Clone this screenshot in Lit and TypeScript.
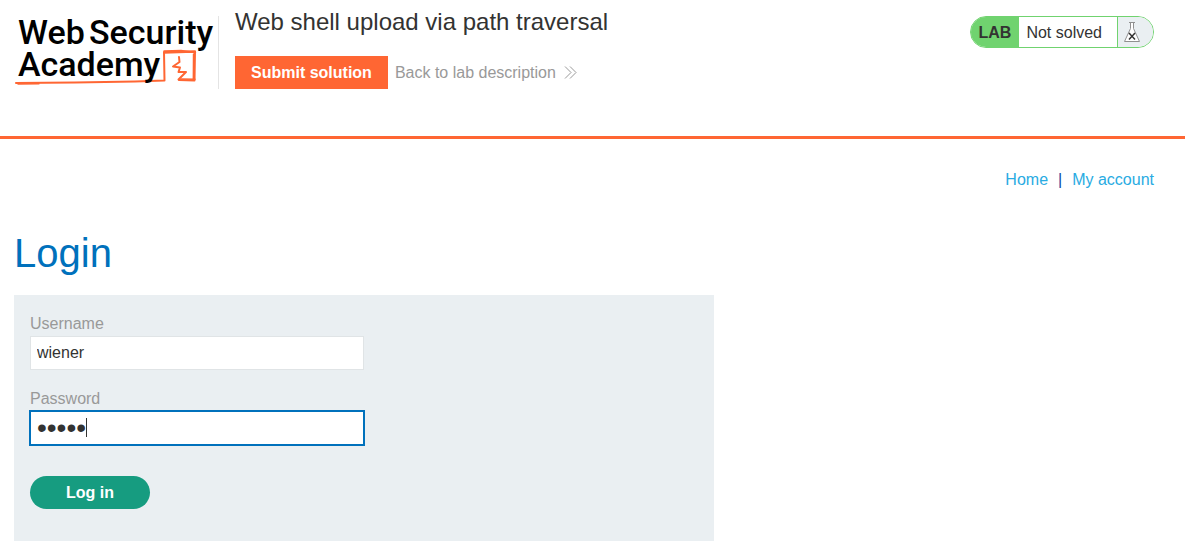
import { LitElement, html, css } from "lit";
import { customElement, query } from "lit/decorators.js";

@customElement("academy-logo")
export class AcademyLogo extends LitElement {
  static styles = css`
    :host { display: block; }
    .logo { display: block; width: 203px; height: 73px; overflow: visible; }
    .word { font-family: Roboto, sans-serif; font-weight: 500; font-size: 34px; fill: #000; }
    .sketch { fill: none; stroke: #ff6633; stroke-linejoin: round; stroke-linecap: round; }
  `;

  render() {
    return html`
      <svg class="logo" viewBox="0 0 203 73" role="img" aria-label="Web Security Academy">
        <path class="sketch" stroke-width="2" d="M1 67 L60 66.400 L120 65.500 L149.500 64.600 L149 36 L180 35.300 L179.500 64.500 L164 64"/>
        <path class="sketch" stroke-width="1.400" d="M3 68 L24 67.800 M149 35 L166 34.500 L180.500 36.500 M149 37 L178 36 M178.500 38 L178.300 64 M166 63 L180 63.200"/>
        <path class="sketch" stroke-width="2" d="M164 41 L164.500 46 L158 50.500 L165 51.500 L163.500 56 L171 56 L163.500 63.500"/>
        <text class="word" x="3" y="28">Web</text>
        <text class="word" x="74" y="28">Security</text>
        <text class="word" x="3" y="60">Academy</text>
      </svg>
    `;
  }
}

@customElement("lab-status")
export class LabStatus extends LitElement {
  static styles = css`
    :host { display: block; flex: none; }
    .pill {
      display: flex;
      height: 30px;
      border: 1px solid #70d36f;
      border-radius: 16px;
      overflow: hidden;
      background: #fff;
      font-size: 16px;
      line-height: 32px;
      color: #333332;
    }
    .tag { padding: 0 8px; background: #70d36f; font-weight: bold; }
    .state { padding: 0 15px 0 7px; line-height: 31px; }
    .flask {
      display: flex;
      align-items: center;
      padding: 0 12px 0 5px;
      border-left: 1px solid #70d36f;
      background: #eaeff2;
    }
    .glyph { display: block; width: 18px; height: 22px; }
  `;

  render() {
    return html`
      <div class="pill">
        <span class="tag">LAB</span>
        <span class="state">Not solved</span>
        <span class="flask">
          <svg class="glyph" viewBox="0 0 18 22" aria-hidden="true">
            <path d="M6 1.500 H12 M7.500 1.500 V7.500 L1.500 20.500 H16.500 L10.500 7.500 V1.500" fill="#fff" stroke="#909090" stroke-width="1"/>
            <path d="M6 12 L12 18.500 M12 12 L6 18.500" stroke="#333332" stroke-width="1.500"/>
          </svg>
        </span>
      </div>
    `;
  }
}

@customElement("login-form")
export class LoginForm extends LitElement {
  @query("#password") private password!: HTMLInputElement;

  static styles = css`
    :host { display: block; max-width: 700px; }
    .form {
      display: flex;
      flex-direction: column;
      align-items: flex-start;
      padding: 16px 16px 32px;
      background: #eaeff2;
    }
    .label { font-size: 16px; line-height: 25px; color: #999; }
    .box { position: relative; width: 50%; margin-bottom: 16px; }
    .field {
      display: block;
      box-sizing: border-box;
      width: 100%;
      height: 34px;
      margin: 0;
      padding: 0 6px;
      border: 1px solid #e0e4e6;
      border-radius: 0;
      background: #fff;
      font: 16px "Liberation Sans", Arial, sans-serif;
      color: #333332;
    }
    .secret { font-size: 28px; caret-color: transparent; }
    .field:focus { border-color: #0071bc; outline: 1px solid #0071bc; }
    .caret { position: absolute; left: 56px; top: 7px; width: 1px; height: 19px; background: #333332; pointer-events: none; }
    .submit {
      width: 120px;
      height: 33px;
      margin-top: 15px;
      padding: 0;
      border: 0;
      border-radius: 17px;
      background: #169c80;
      color: #fff;
      font: bold 16px "Liberation Sans", Arial, sans-serif;
    }
  `;

  firstUpdated() {
    this.password.focus();
    this.password.setSelectionRange(5, 5);
  }

  render() {
    return html`
      <form class="form" @submit=${(e: Event) => e.preventDefault()}>
        <label class="label" for="username">Username</label>
        <div class="box">
          <input class="field" id="username" type="text" name="username" value="wiener" />
        </div>
        <label class="label" for="password">Password</label>
        <div class="box">
          <input class="field secret" id="password" type="password" name="password" value="peter" />
          <span class="caret"></span>
        </div>
        <button class="submit" type="submit">Log in</button>
      </form>
    `;
  }
}

@customElement("app-root")
export class AppRoot extends LitElement {
  static styles = css`
    :host {
      display: block;
      background: #fff;
      color: #333332;
      font-family: "Liberation Sans", Arial, sans-serif;
      font-size: 16px;
    }
    .header {
      display: flex;
      align-items: flex-start;
      box-sizing: border-box;
      min-height: 139px;
      padding: 0 31px 0 15px;
      border-bottom: 3px solid #ff6633;
    }
    .brand { flex: none; margin-top: 16px; border-right: 1px solid #e4e4e4; color: inherit; }
    .intro { flex: 1; padding: 6px 16px 0; }
    .title { margin: 0; font-size: 24px; font-weight: normal; line-height: 32px; }
    .actions { display: flex; align-items: center; gap: 7px; margin-top: 18px; }
    .solve {
      height: 33px;
      padding: 0 16px;
      border: 0;
      background: #ff6633;
      color: #fff;
      font: bold 16px "Liberation Sans", Arial, sans-serif;
    }
    .back { display: flex; align-items: center; gap: 8px; color: #999; text-decoration: none; }
    .chevrons { width: 13px; height: 13px; }
    .status { margin-top: 16px; }
    .main { padding: 31px 31px 8px 14px; }
    .nav { display: flex; justify-content: flex-end; gap: 10px; line-height: 20px; color: #0b4a9e; }
    .link { color: #29abe2; text-decoration: none; }
    .heading { margin: 39px 0 18px; font-size: 40px; font-weight: normal; line-height: 48px; color: #0071bc; }
  `;

  render() {
    return html`
      <header class="header">
        <a class="brand" href="#"><academy-logo></academy-logo></a>
        <div class="intro">
          <h2 class="title">Web shell upload via path traversal</h2>
          <div class="actions">
            <button class="solve" type="button">Submit solution</button>
            <a class="back" href="#">
              Back to lab description
              <svg class="chevrons" viewBox="0 0 13 13" aria-hidden="true">
                <path d="M1 .500 L7 6.500 L1 12.500 M6 .500 L12 6.500 L6 12.500" fill="none" stroke="#999" stroke-width="1"/>
              </svg>
            </a>
          </div>
        </div>
        <lab-status class="status"></lab-status>
      </header>
      <main class="main">
        <nav class="nav">
          <a class="link" href="#">Home</a><span>|</span><a class="link" href="#">My account</a>
        </nav>
        <h1 class="heading">Login</h1>
        <login-form></login-form>
      </main>
    `;
  }
}
